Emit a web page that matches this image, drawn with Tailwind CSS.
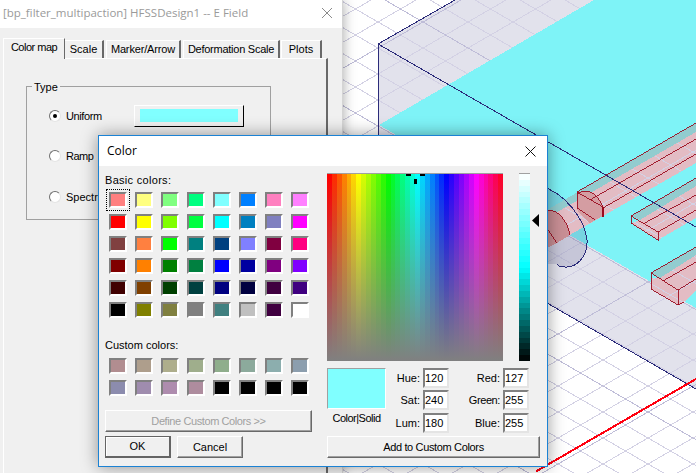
<!DOCTYPE html>
<html>
<head>
<meta charset="utf-8">
<script src="https://cdn.jsdelivr.net/npm/@tailwindcss/browser@4"></script>
</head>
<body class="bg-white">
<div class="relative w-[696px] h-[473px] overflow-hidden bg-white font-['Liberation_Sans',Arial,sans-serif] text-[11px] text-black">

  <!-- 3D model view -->
  <svg class="absolute inset-0 [shape-rendering:crispEdges]" width="696" height="473" viewBox="0 0 696 473">
    <defs>
      <pattern id="g" patternUnits="userSpaceOnUse" x="423" y="22" width="45" height="26">
        <path d="M0 0L45 26M0 26L45 0" stroke="#d3d1e4" stroke-width="1" fill="none"/>
      </pattern>
      <pattern id="h" patternUnits="userSpaceOnUse" x="423" y="22" width="225" height="130">
        <path d="M0 0L225 130M0 130L225 0" stroke="#bfbdd8" stroke-width="1" fill="none"/>
      </pattern>
    </defs>
    <polygon points="378,44 455,0 594,0 379,125 696,308 696,389 378,205" fill="#e2e2ec"/>
    <rect x="343" width="353" height="473" fill="url(#g)"/>
    <rect x="343" width="353" height="473" fill="url(#h)"/>
    <polygon points="379,125 594,0 696,0 696,308" fill="#7ef3f7"/>

    <!-- cylinder -->
    <path d="M540,186 C565,192 585,220 587,240 C588,258 575,268 565,267 C560,267 558,266 557,264 L540,264Z" fill="#5a5a8c" fill-opacity=".2"/>

    <!-- bar 1 -->
    <polygon points="547,210 696,123 696,132 547,218" fill="#92cccf"/>
    <polygon points="547,218 696,132 696,163 603,216 547,248" fill="#e3bcc4"/>
    <polygon points="547,218 696,132 696,163 603,216 547,248" fill="url(#g)"/>
    <path d="M548,211 C557,208 568,222 570,235 L557,243 L547,248Z" fill="#c98f95"/>
    <path d="M577,194 C590,185 600,198 603,208 L603,216 L590,223 C582,216 577,212 577,208Z" fill="#d49da2"/>

    <!-- bar 2 -->
    <polygon points="631,216 696,178 696,186 640,220" fill="#92cccf"/>
    <polygon points="631,223 640,220 696,186 696,218 658,240" fill="#e3bcc4"/>
    <polygon points="631,223 640,220 696,186 696,218 658,240" fill="url(#g)"/>

    <!-- bar 3 -->
    <polygon points="651,273 696,247 696,255 660,278" fill="#92cccf"/>
    <polygon points="651,289 651,278 660,278 696,255 696,290 685,301 678,305" fill="#e3bcc4"/>
    <polygon points="651,289 651,278 660,278 696,255 696,290 685,301 678,305" fill="url(#g)"/>

    <g stroke="#9a0a1e" stroke-width="0.9" fill="none">
      <path d="M577,192L696,123M590,200L696,139M603,208L696,154M577,192L603,207M577,192V208M577,208L595,220"/>
      <path d="M603,207V217" stroke-width="2"/>
      <path d="M577,194C590,185 600,198 603,208"/>
      <path d="M548,211C557,208 568,222 570,235M547,228L557,243"/>
      <path d="M631,216L696,178M643,224L696,195M658,232L696,210M631,216L658,232M631,216V224M658,232V241M631,223L658,240"/>
      <path d="M651,273L696,247M663,281L696,262M678,290L696,279M651,273L678,290M651,273V289M678,290V305M651,289L678,305M678,305L684,302"/>
    </g>

    <g stroke="#2b2b7a" stroke-width="1" fill="none">
      <path d="M378,44L455,0M378,44V135M378,44L696,227"/>
      <path d="M547,303L696,389"/>
      <path d="M540,186C565,192 585,220 587,240C588,258 575,268 565,267C560,267 558,266 557,264"/>
    </g>
    <path d="M536,471.4L696,379" stroke="#ff0010" stroke-width="2" fill="none"/>
  </svg>

  <!-- E Field window -->
  <div class="absolute left-0 top-0 w-[343px] h-[473px] bg-[#f0f0f0] border-r border-[#d4d4d4] shadow-[0_0_12px_rgba(0,0,0,0.35)] flex flex-col">
    <div class="h-[28px] shrink-0 bg-white flex items-center justify-between pl-[3px] pr-[10px] pb-[2px] font-['Open_Sans',sans-serif] text-[11.5px] text-[#9a9a9a]">
      <span class="whitespace-nowrap">[bp_filter_multipaction] HFSSDesign1 -- E Field</span>
      <svg width="10" height="10" viewBox="0 0 10 10"><path d="M0 0L10 10M10 0L0 10" stroke="#8a8a8a" stroke-width="1"/></svg>
    </div>

    <div class="mt-[9px] h-[21px] shrink-0 flex items-end pl-[3px] relative z-10 *:whitespace-nowrap">
      <div class="w-[62px] h-[21px] -mb-px pb-[3px] flex items-center justify-center bg-[#f0f0f0] border-t border-l border-r border-t-white border-l-white border-r-[#696969] tracking-[-0.5px]">Color map</div>
      <div class="w-[39px] h-[18px] flex items-center justify-center border-t border-r-2 border-t-white border-r-[#696969]">Scale</div>
      <div class="ml-[2px] w-[75px] h-[18px] flex items-center justify-center border-t border-l border-r-2 border-t-white border-l-white border-r-[#696969] tracking-[-0.15px]">Marker/Arrow</div>
      <div class="ml-[2px] w-[97px] h-[18px] flex items-center justify-center border-t border-l border-r-2 border-t-white border-l-white border-r-[#696969] tracking-[-0.25px]">Deformation Scale</div>
      <div class="ml-[1px] w-[41px] h-[18px] flex items-center justify-center border-t border-l border-r-2 border-t-white border-l-white border-r-[#696969]">Plots</div>
    </div>

    <div class="ml-[3px] w-[325px] flex-1 border-t border-l border-r-2 border-t-white border-l-white border-r-[#696969] pt-[27px] pl-[22px]">
      <div class="relative w-[245px] h-[134px] border border-[#a0a0a0] pt-[18px] pl-[22px]">
        <span class="absolute left-[5px] -top-[7px] bg-[#f0f0f0] px-[2px] leading-[14px]">Type</span>
        <div class="h-[22px] flex items-center">
          <div class="w-[12px] h-[12px] rounded-full border border-t-[#6f6f6f] border-l-[#6f6f6f] border-r-[#e4e4e4] border-b-[#e4e4e4] bg-white flex items-center justify-center"><div class="w-[4px] h-[4px] rounded-full bg-black"></div></div>
          <span class="ml-[5px] w-[68px] tracking-[-0.4px]">Uniform</span>
          <div class="w-[110px] h-[22px] bg-[#f0f0f0] border border-t-white border-l-white border-r-black border-b-black flex items-start justify-center pt-[3px]">
            <div class="w-[98px] h-[13px] bg-[#80ffff]"></div>
          </div>
        </div>
        <div class="mt-[18px] h-[22px] flex items-center">
          <div class="w-[12px] h-[12px] rounded-full border border-t-[#6f6f6f] border-l-[#6f6f6f] border-r-[#e4e4e4] border-b-[#e4e4e4] bg-white"></div>
          <span class="ml-[5px] tracking-[-0.5px]">Ramp</span>
        </div>
        <div class="mt-[19px] h-[22px] flex items-center">
          <div class="w-[12px] h-[12px] rounded-full border border-t-[#6f6f6f] border-l-[#6f6f6f] border-r-[#e4e4e4] border-b-[#e4e4e4] bg-white"></div>
          <span class="ml-[5px]">Spectrum</span>
        </div>
      </div>
    </div>
  </div>

  <!-- Color dialog -->
  <div class="absolute left-[98px] top-[135px] w-[450px] h-[332px] bg-[#f0f0f0] border border-[#1b82d4] shadow-[0_0_16px_rgba(0,0,0,0.4)] flex flex-col">
    <div class="h-[30px] shrink-0 bg-white flex items-center justify-between pl-[8px] pr-[11px] font-['Open_Sans',sans-serif] text-[12px]">
      <span>Color</span>
      <svg width="11" height="11" viewBox="0 0 11 11"><path d="M0.5 0.5L10.5 10.5M10.5 0.5L0.5 10.5" stroke="#111" stroke-width="1"/></svg>
    </div>
    <div class="flex pl-[6px] pt-[7px]">
      <!-- left column -->
      <div class="w-[207px] flex flex-col">
        <div class="h-[14px] leading-[14px] tracking-[0.3px]">Basic colors:</div>
        <div class="mt-[5px] ml-[4px] grid grid-cols-[repeat(8,18px)] auto-rows-[16px] gap-x-[8px] gap-y-[6px] *:border-2 *:border-t-[#808080] *:border-l-[#808080] *:border-r-white *:border-b-white">
          <div class="bg-[#ff8080] outline-1 outline-dotted outline-black outline-offset-2"></div><div class="bg-[#ffff80]"></div><div class="bg-[#80ff80]"></div><div class="bg-[#00ff80]"></div><div class="bg-[#80ffff]"></div><div class="bg-[#0080ff]"></div><div class="bg-[#ff80c0]"></div><div class="bg-[#ff80ff]"></div>
          <div class="bg-[#ff0000]"></div><div class="bg-[#ffff00]"></div><div class="bg-[#80ff00]"></div><div class="bg-[#00ff40]"></div><div class="bg-[#00ffff]"></div><div class="bg-[#0080c0]"></div><div class="bg-[#8080c0]"></div><div class="bg-[#ff00ff]"></div>
          <div class="bg-[#804040]"></div><div class="bg-[#ff8040]"></div><div class="bg-[#00ff00]"></div><div class="bg-[#008080]"></div><div class="bg-[#004080]"></div><div class="bg-[#8080ff]"></div><div class="bg-[#800040]"></div><div class="bg-[#ff0080]"></div>
          <div class="bg-[#800000]"></div><div class="bg-[#ff8000]"></div><div class="bg-[#008000]"></div><div class="bg-[#008040]"></div><div class="bg-[#0000ff]"></div><div class="bg-[#0000a0]"></div><div class="bg-[#800080]"></div><div class="bg-[#8000ff]"></div>
          <div class="bg-[#400000]"></div><div class="bg-[#804000]"></div><div class="bg-[#004000]"></div><div class="bg-[#004040]"></div><div class="bg-[#000080]"></div><div class="bg-[#000040]"></div><div class="bg-[#400040]"></div><div class="bg-[#400080]"></div>
          <div class="bg-[#000000]"></div><div class="bg-[#808000]"></div><div class="bg-[#808040]"></div><div class="bg-[#808080]"></div><div class="bg-[#408080]"></div><div class="bg-[#c0c0c0]"></div><div class="bg-[#400040]"></div><div class="bg-[#ffffff]"></div>
        </div>
        <div class="mt-[20px] h-[14px] leading-[14px]">Custom colors:</div>
        <div class="mt-[6px] ml-[4px] grid grid-cols-[repeat(8,18px)] auto-rows-[16px] gap-x-[8px] gap-y-[6px] *:border-2 *:border-t-[#808080] *:border-l-[#808080] *:border-r-white *:border-b-white">
          <div class="bg-[#b18d90]"></div><div class="bg-[#ae9e8c]"></div><div class="bg-[#aeae8c]"></div><div class="bg-[#9fae8c]"></div><div class="bg-[#8fae8c]"></div><div class="bg-[#8caa9c]"></div><div class="bg-[#8caeae]"></div><div class="bg-[#8c9eae]"></div>
          <div class="bg-[#8c8cae]"></div><div class="bg-[#9f8cae]"></div><div class="bg-[#ae8cae]"></div><div class="bg-[#ae8c9e]"></div><div class="bg-black"></div><div class="bg-black"></div><div class="bg-black"></div><div class="bg-black"></div>
        </div>
        <div class="mt-[14px] h-[22px] flex items-center justify-center border border-t-white border-l-white border-r-[#696969] border-b-[#696969] shadow-[inset_-1px_-1px_0_#a0a0a0] text-[#a0a0a0] tracking-[-0.4px]">Define Custom Colors &gt;&gt;</div>
        <div class="mt-[4px] flex gap-[6px]">
          <div class="w-[66px] h-[22px] flex items-center justify-center border border-[#646464] border-r-2 border-b-2 shadow-[inset_1px_1px_0_#fff]">OK</div>
          <div class="w-[66px] h-[22px] flex items-center justify-center border border-t-white border-l-white border-r-[#696969] border-b-[#696969] shadow-[inset_-1px_-1px_0_#a0a0a0]">Cancel</div>
        </div>
      </div>
      <!-- right column -->
      <div class="ml-[15px] w-[213px] flex flex-col">
        <div class="flex h-[188px]">
          <div id="spectrum" class="relative w-[176px] h-full flex border-t border-[#a0a0a0]">
            <div class="absolute left-[79px] top-0 w-[5px] h-[2px] bg-black"></div>
            <div class="absolute left-[93px] top-0 w-[5px] h-[2px] bg-black"></div>
            <div class="absolute left-[87px] top-[5px] w-[3px] h-[5px] bg-black"></div>
          </div>
          <div id="lum" class="ml-[16px] w-[11px] h-full flex flex-col border-t border-[#a0a0a0]"></div>
          <svg class="ml-[2px] mt-[41px]" width="7" height="13" viewBox="0 0 7 13"><path d="M7 0V13L0 6.5Z" fill="#000"/></svg>
        </div>
        <div class="mt-[7px] flex">
          <div class="w-[59px] flex flex-col items-center">
            <div class="w-full h-[41px] bg-[#80ffff] border-t border-l border-t-[#a0a0a0] border-l-[#a0a0a0] border-r border-b border-r-white border-b-white"></div>
            <div class="mt-[2px] leading-[14px] whitespace-nowrap tracking-[-0.5px]">Color|Solid</div>
          </div>
          <div class="grid grid-cols-[34px_26px_48px_26px] grid-rows-[20px_21px_20px] gap-x-[3px] gap-y-[2px] items-center text-right *:whitespace-nowrap">
            <div>Hue:</div><div class="h-[20px] self-start bg-white border-2 border-t-[#808080] border-l-[#808080] border-r-[#e4e4e4] border-b-[#e4e4e4] flex items-center">120</div>
            <div>Red:</div><div class="h-[20px] self-start bg-white border-2 border-t-[#808080] border-l-[#808080] border-r-[#e4e4e4] border-b-[#e4e4e4] flex items-center">127</div>
            <div>Sat:</div><div class="h-[20px] self-start bg-white border-2 border-t-[#808080] border-l-[#808080] border-r-[#e4e4e4] border-b-[#e4e4e4] flex items-center">240</div>
            <div class="tracking-[-0.4px]">Green:</div><div class="h-[20px] self-start bg-white border-2 border-t-[#808080] border-l-[#808080] border-r-[#e4e4e4] border-b-[#e4e4e4] flex items-center">255</div>
            <div>Lum:</div><div class="h-[20px] self-start bg-white border-2 border-t-[#808080] border-l-[#808080] border-r-[#e4e4e4] border-b-[#e4e4e4] flex items-center">180</div>
            <div>Blue:</div><div class="h-[20px] self-start bg-white border-2 border-t-[#808080] border-l-[#808080] border-r-[#e4e4e4] border-b-[#e4e4e4] flex items-center">255</div>
          </div>
        </div>
        <div class="mt-[3px] h-[22px] flex items-center justify-center border border-t-white border-l-white border-r-[#696969] border-b-[#696969] shadow-[inset_-1px_-1px_0_#a0a0a0] tracking-[-0.35px]">Add to Custom Colors</div>
      </div>
    </div>
  </div>
</div>
<script>
  // Colour-picker bands, computed from hue and luminance values.
  var spec = document.getElementById('spectrum');
  for (var i = 0; i < 36; i++) {
    var c = document.createElement('div');
    c.className = 'flex-1';
    c.style.background = 'linear-gradient(hsl(' + (i * 10) + ',100%,50%),#808080)';
    spec.appendChild(c);
  }
  var lum = document.getElementById('lum');
  var n = 32;
  for (var j = 0; j < n; j++) {
    var b = document.createElement('div');
    b.className = 'flex-1';
    b.style.background = 'hsl(180,100%,' + (100 - (j + 0.5) * 100 / n) + '%)';
    lum.appendChild(b);
  }
</script>
</body>
</html>
